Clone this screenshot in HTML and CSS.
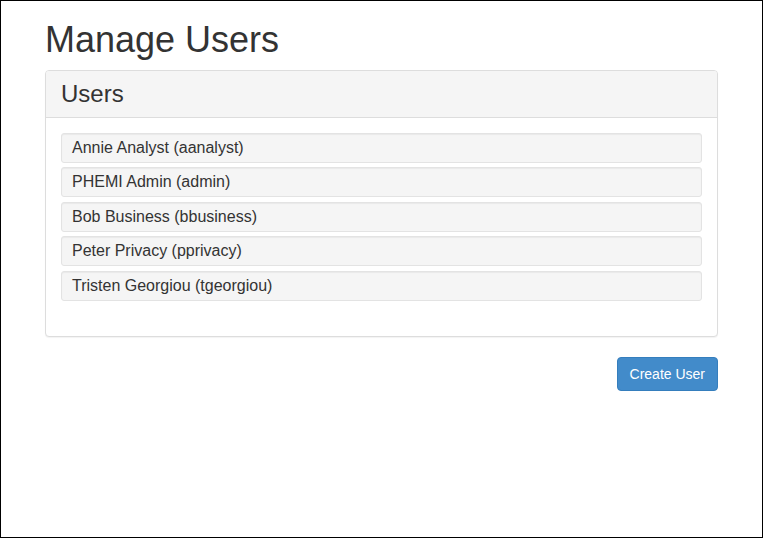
FILE: index.html
```html
<!DOCTYPE html>
<html>
<head>
<meta charset="utf-8">
<title>Manage Users</title>
<link rel="stylesheet" href="styles.css">
</head>
<body>
<div class="container">
  <h1 class="page-title">Manage Users</h1>
  <div class="panel">
    <div class="panel-heading">
      <h2 class="panel-title">Users</h2>
    </div>
    <div class="panel-body">
      <ul class="user-list">
        <li class="user-item">Annie Analyst (aanalyst)</li>
        <li class="user-item">PHEMI Admin (admin)</li>
        <li class="user-item">Bob Business (bbusiness)</li>
        <li class="user-item">Peter Privacy (pprivacy)</li>
        <li class="user-item">Tristen Georgiou (tgeorgiou)</li>
      </ul>
    </div>
  </div>
  <div class="actions">
    <button class="btn-primary" type="button">Create User</button>
  </div>
</div>
</body>
</html>
```

FILE: styles.css
```css
* {
  box-sizing: border-box;
}
html, body {
  margin: 0;
  padding: 0;
}
body {
  width: 763px;
  height: 538px;
  border: 1px solid #000;
  background: #fff;
  font-family: "Liberation Sans", Arial, sans-serif;
  font-size: 14px;
  line-height: 1.428571;
  color: #333;
  overflow: hidden;
}
.container {
  width: 673px;
  margin: 0 auto;
}
.page-title {
  margin: 19px 0 10px;
  font-size: 36px;
  font-weight: 500;
  line-height: 1.1;
  color: #333;
}
.panel {
  border: 1px solid #ddd;
  border-radius: 4px;
  background: #fff;
  box-shadow: 0 1px 1px rgba(0, 0, 0, 0.05);
}
.panel-heading {
  background: #f5f5f5;
  border-bottom: 1px solid #ddd;
  border-radius: 3px 3px 0 0;
  padding: 10px 15px;
}
.panel-title {
  margin: 0;
  font-size: 24px;
  font-weight: 500;
  line-height: 1.1;
  color: #333;
}
.panel-body {
  padding: 15px;
}
.user-list {
  list-style: none;
  margin: 0 0 20px;
  padding: 0;
}
.user-item {
  background: #f5f5f5;
  border: 1px solid #e3e3e3;
  border-radius: 3px;
  box-shadow: inset 0 1px 1px rgba(0, 0, 0, 0.05);
  padding: 4px 10px;
  margin-bottom: 4.5px;
  font-size: 16px;
  line-height: 20px;
  color: #333;
}
.actions {
  display: flex;
  justify-content: flex-end;
  margin-top: 20px;
}
.btn-primary {
  font-family: "Liberation Sans", Arial, sans-serif;
  font-size: 14px;
  line-height: 20px;
  padding: 6px 12px;
  color: #fff;
  background: #428bca;
  border: 1px solid #357ebd;
  border-radius: 4px;
  cursor: pointer;
}
```
